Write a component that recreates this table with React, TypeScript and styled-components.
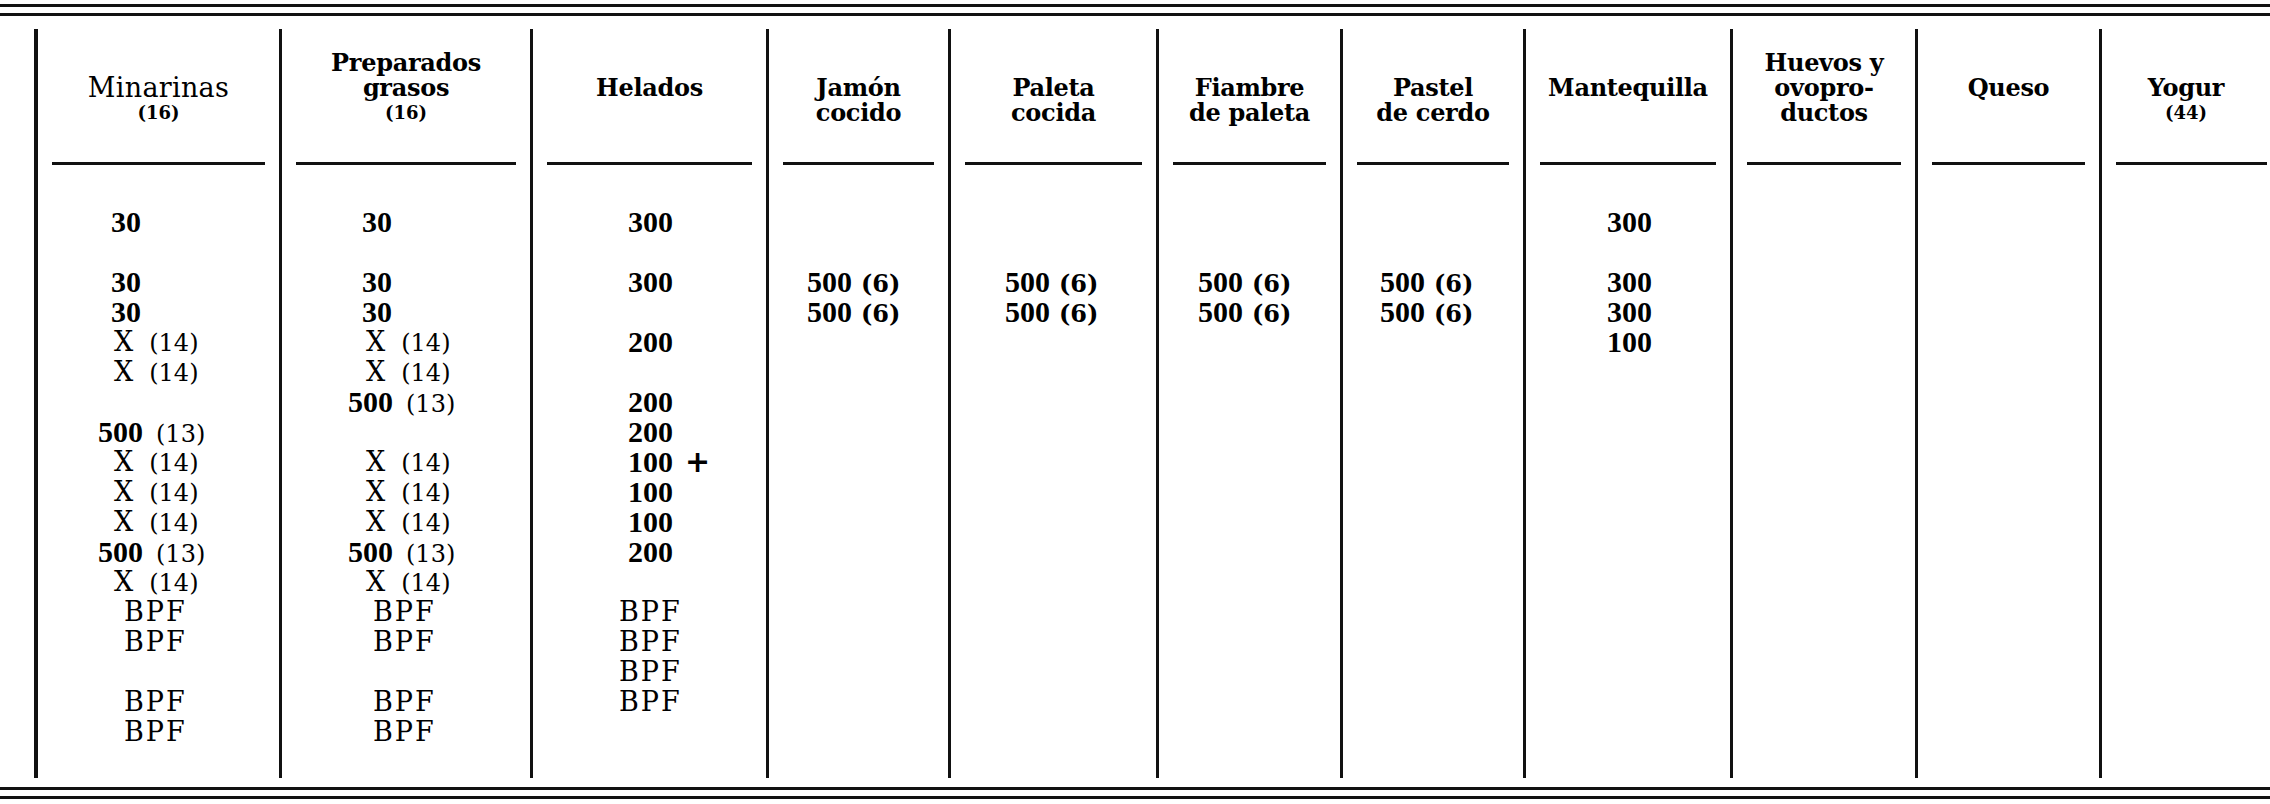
import React from 'react';
import styled, { createGlobalStyle } from 'styled-components';

const Global = createGlobalStyle`
  html, body { margin: 0; padding: 0; background: #fff; }
  #root { width: 2270px; height: 804px; }
`;

type Kind = 'num' | 'x' | 'bpf';
type Cell = { kind: Kind; main: string; note?: string; indent: number; gap?: number } | null;

type Column = {
  width: number;
  title: string[];
  note?: string;
  light?: boolean;
  rows: Cell[];
};

const ROWS = 18;

function fill(entries: Record<number, Cell>): Cell[] {
  return Array.from({ length: ROWS }, (_, i) => entries[i] ?? null);
}

const n = (main: string, indent: number, note?: string, gap?: number): Cell => ({ kind: 'num', main, note, indent, gap });
const x = (indent: number): Cell => ({ kind: 'x', main: 'X', note: '(14)', indent, gap: 16 });
const bpf = (indent: number): Cell => ({ kind: 'bpf', main: 'BPF', indent });

const sixes = (indent: number) => fill({ 2: n('500', indent, '(6)', 9), 3: n('500', indent, '(6)', 9) });

const columns: Column[] = [
  {
    width: 245,
    title: ['Minarinas'],
    note: '(16)',
    light: true,
    rows: fill({
      0: n('30', 73), 2: n('30', 73), 3: n('30', 73),
      4: x(76), 5: x(76), 7: n('500', 60, '(13)', 13),
      8: x(76), 9: x(76), 10: x(76), 11: n('500', 60, '(13)', 13), 12: x(76),
      13: bpf(86), 14: bpf(86), 16: bpf(86), 17: bpf(86),
    }),
  },
  {
    width: 251,
    title: ['Preparados', 'grasos'],
    note: '(16)',
    rows: fill({
      0: n('30', 80), 2: n('30', 80), 3: n('30', 80),
      4: x(84), 5: x(84), 6: n('500', 66, '(13)', 13),
      8: x(84), 9: x(84), 10: x(84), 11: n('500', 66, '(13)', 13), 12: x(84),
      13: bpf(91), 14: bpf(91), 16: bpf(91), 17: bpf(91),
    }),
  },
  {
    width: 236,
    title: ['Helados'],
    rows: fill({
      0: n('300', 95), 2: n('300', 95), 4: n('200', 95), 6: n('200', 95), 7: n('200', 95),
      8: n('100', 95, '+', 12), 9: n('100', 95), 10: n('100', 95), 11: n('200', 95),
      13: bpf(86), 14: bpf(86), 15: bpf(86), 16: bpf(86),
    }),
  },
  { width: 182, title: ['Jamón', 'cocido'], rows: sixes(38) },
  { width: 208, title: ['Paleta', 'cocida'], rows: sixes(54) },
  { width: 184, title: ['Fiambre', 'de paleta'], rows: sixes(39) },
  { width: 183, title: ['Pastel', 'de cerdo'], rows: sixes(37) },
  {
    width: 207,
    title: ['Mantequilla'],
    rows: fill({ 0: n('300', 81), 2: n('300', 81), 3: n('300', 81), 4: n('100', 81) }),
  },
  { width: 185, title: ['Huevos y', 'ovopro-', 'ductos'], rows: fill({}) },
  { width: 184, title: ['Queso'], rows: fill({}) },
  { width: 171, title: ['Yogur'], note: '(44)', rows: fill({}) },
];

const Page = styled.div`
  width: 2270px;
  height: 804px;
  background: #fff;
  color: #000;
  display: flex;
  flex-direction: column;
  overflow: hidden;
`;

const DoubleRule = styled.div<{ $gapAbove: number }>`
  margin-top: ${(p) => p.$gapAbove}px;
  height: 6px;
  border-top: 3px solid #111;
  border-bottom: 3px solid #111;
  flex: none;
`;

const Table = styled.div<{ $template: string }>`
  margin-top: 13px;
  margin-left: 34px;
  height: 749px;
  display: grid;
  grid-template-columns: ${(p) => p.$template};
  flex: none;
`;

const Col = styled.div<{ $first?: boolean }>`
  border-left: ${(p) => (p.$first ? 4 : 3)}px solid #111;
  display: flex;
  flex-direction: column;
  min-width: 0;
`;

const Header = styled.div<{ $tall: boolean }>`
  height: 133px;
  box-sizing: border-box;
  padding-top: ${(p) => (p.$tall ? 21 : 46)}px;
  text-align: center;
  font-family: 'DejaVu Serif', serif;
`;

const HeaderLine = styled.div<{ $light?: boolean }>`
  font-size: ${(p) => (p.$light ? 27 : 24)}px;
  font-weight: ${(p) => (p.$light ? 400 : 700)};
  line-height: 25px;
  white-space: nowrap;
  letter-spacing: ${(p) => (p.$light ? 0.3 : -0.3)}px;
`;

const HeaderNote = styled.div`
  font-size: 18px;
  font-weight: 700;
  line-height: 25px;
`;

const Underline = styled.div<{ $last?: boolean }>`
  height: 3px;
  background: #111;
  margin: 0 ${(p) => (p.$last ? 3 : 14)}px 0 14px;
  flex: none;
`;

const Body = styled.div`
  padding-top: 42px;
  display: flex;
  flex-direction: column;
`;

const Row = styled.div<{ $indent: number }>`
  height: 30px;
  line-height: 30px;
  padding-left: ${(p) => p.$indent}px;
  white-space: nowrap;
  display: flex;
  align-items: baseline;
`;

const NumText = styled.span`
  font-family: 'Liberation Serif', serif;
  font-weight: 700;
  font-size: 30px;
`;

const PlainText = styled.span<{ $wide?: boolean }>`
  font-family: 'DejaVu Serif', serif;
  font-size: 27px;
  letter-spacing: ${(p) => (p.$wide ? 2 : 0)}px;
`;

const Note = styled.span<{ $gap: number; $bold?: boolean; $plus?: boolean }>`
  margin-left: ${(p) => p.$gap}px;
  font-family: ${(p) => (p.$plus ? "'DejaVu Sans'" : "'DejaVu Serif'")}, serif;
  font-weight: ${(p) => (p.$bold ? 700 : 400)};
  font-size: ${(p) => (p.$plus ? 30 : 24)}px;
`;

function CellView({ cell }: { cell: Cell }) {
  if (!cell) return <Row $indent={0} />;
  const main =
    cell.kind === 'num' ? (
      <NumText>{cell.main}</NumText>
    ) : (
      <PlainText $wide={cell.kind === 'bpf'}>{cell.main}</PlainText>
    );
  return (
    <Row $indent={cell.indent}>
      {main}
      {cell.note && (
        <Note
          $gap={cell.gap ?? 10}
          $bold={cell.note === '(6)' || cell.note === '+'}
          $plus={cell.note === '+'}
        >
          {cell.note}
        </Note>
      )}
    </Row>
  );
}

export default function App() {
  const template = columns.map((c) => `${c.width}px`).join(' ');
  return (
    <Page>
      <Global />
      <DoubleRule $gapAbove={4} />
      <Table $template={template}>
        {columns.map((col, ci) => (
          <Col key={ci} $first={ci === 0}>
            <Header $tall={col.title.length === 3 || (col.title.length === 2 && !!col.note)}>
              {col.title.map((t) => (
                <HeaderLine key={t} $light={col.light}>
                  {t}
                </HeaderLine>
              ))}
              {col.note && <HeaderNote>{col.note}</HeaderNote>}
            </Header>
            <Underline $last={ci === columns.length - 1} />
            <Body>
              {col.rows.map((cell, ri) => (
                <CellView key={ri} cell={cell} />
              ))}
            </Body>
          </Col>
        ))}
      </Table>
      <DoubleRule $gapAbove={9} />
    </Page>
  );
}
